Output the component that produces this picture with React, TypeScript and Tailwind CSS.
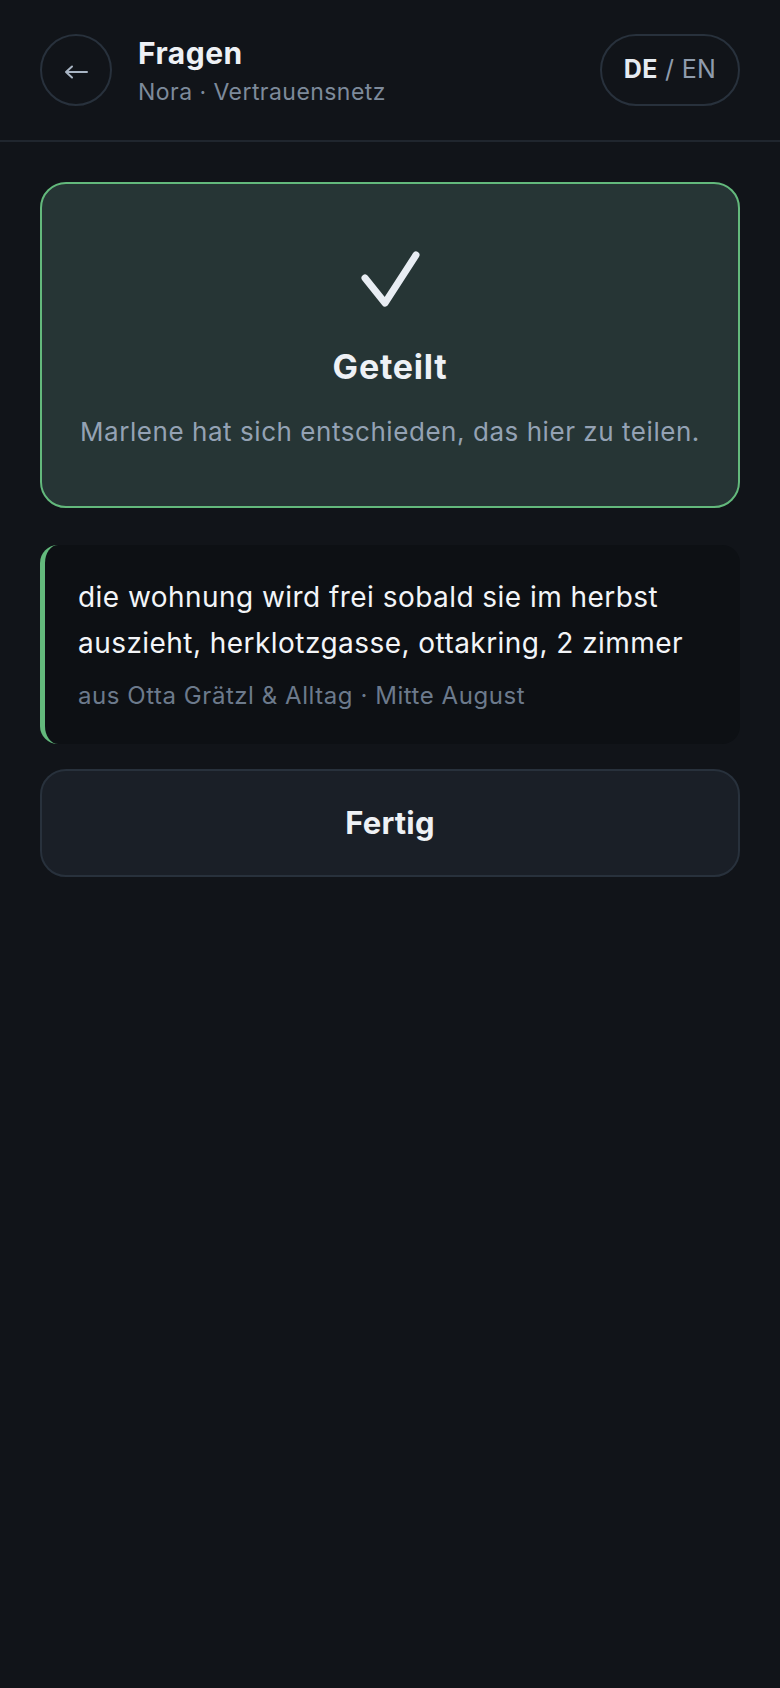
import React from "react";

export default function App() {
  return (
    <div
      className="min-h-[1688px] w-full bg-[#111419] text-[#e6ebf1]"
      style={{ fontFamily: "Inter, 'Noto Sans', sans-serif" }}
    >
      <header className="flex h-[142px] items-start justify-between border-b-2 border-[#20262e] px-[40px] pt-[34px]">
        <div className="flex items-start gap-[26px]">
          <button className="flex h-[72px] w-[72px] items-center justify-center rounded-full border-2 border-[#28313c] pt-[4px]">
            <svg width="24" height="14" viewBox="0 0 24 14" fill="none">
              <path
                d="M23 7 H2 M8 1.5 L2 7 L8 12.5"
                stroke="#a9b5c4"
                strokeWidth="2"
                strokeLinecap="round"
                strokeLinejoin="round"
              />
            </svg>
          </button>
          <div className="flex flex-col">
            <div className="text-[30px] font-bold leading-[38px] tracking-[0.5px] text-[#eef1f5]">Fragen</div>
            <div className="mt-[5px] text-[23px] leading-[30px] tracking-[0.45px] text-[#7d8a9b]">
              Nora · Vertrauensnetz
            </div>
          </div>
        </div>
        <div className="flex h-[72px] w-[140px] items-center justify-center whitespace-pre rounded-full border-2 border-[#28313c] text-[25px] tracking-[0.3px]">
          <span className="font-bold text-[#e6ebf1]">DE</span>
          <span className="text-[#8f9cad]"> / EN</span>
        </div>
      </header>

      <main className="flex flex-col px-[40px] pt-[40px]">
        <section className="flex flex-col items-center rounded-[26px] border-2 border-[#63b97c] bg-[#263535] pb-[56px] pt-[65px]">
          <svg width="60" height="60" viewBox="0 0 60 60" fill="none">
            <path
              d="M5 29 L25 54 L56 6"
              stroke="#e8edf3"
              strokeWidth="7"
              strokeLinecap="round"
              strokeLinejoin="round"
            />
          </svg>
          <div className="mt-[38px] text-[34px] font-bold leading-[40px] tracking-[0.75px] text-[#eef1f5]">
            Geteilt
          </div>
          <div className="mt-[27px] text-[26px] leading-[36px] tracking-[0.55px] text-[#94a2b4]">
            Marlene hat sich entschieden, das hier zu teilen.
          </div>
        </section>

        <section className="mt-[37px] rounded-[18px] border-l-[5px] border-[#63b97c] bg-[#0d1014] pb-[32px] pl-[33px] pr-[30px] pt-[29px]">
          <p className="text-[28px] leading-[46px] tracking-[0.45px] text-[#f3f5f8]">
            die wohnung wird frei sobald sie im herbst auszieht, herklotzgasse, ottakring, 2 zimmer
          </p>
          <p className="mt-[14px] text-[24px] leading-[32px] tracking-[0.55px] text-[#6c7a8c]">
            aus Otta Grätzl &amp; Alltag · Mitte August
          </p>
        </section>

        <button className="mt-[25px] flex h-[108px] items-center justify-center rounded-[26px] border-2 border-[#28313c] bg-[#1a1f27] text-[31px] font-bold tracking-[0.2px] text-[#eef1f5]">
          Fertig
        </button>
      </main>
    </div>
  );
}
